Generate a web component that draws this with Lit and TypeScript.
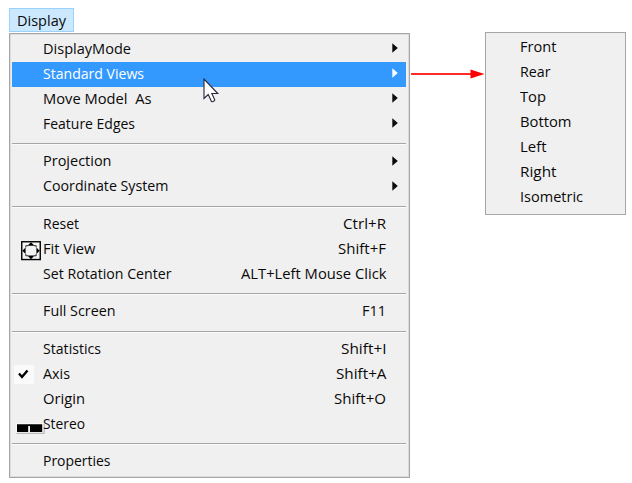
import { LitElement, html, css, svg, nothing } from "lit";
import { customElement, property } from "lit/decorators.js";

interface Entry {
  label: string;
  width: number;
  keys?: string;
  keysWidth?: number;
  sub?: boolean;
  active?: boolean;
  icon?: "fit" | "check" | "stereo";
}

const groups: Entry[][] = [
  [
    { label: "DisplayMode", width: 88, sub: true },
    { label: "Standard Views", width: 101, sub: true, active: true },
    { label: "Move Model\u00a0 As", width: 108.5, sub: true },
    { label: "Feature Edges", width: 92, sub: true },
  ],
  [
    { label: "Projection", width: 68.5, sub: true },
    { label: "Coordinate System", width: 125.5, sub: true },
  ],
  [
    { label: "Reset", width: 36, keys: "Ctrl+R", keysWidth: 43 },
    { label: "Fit View", width: 52.5, keys: "Shift+F", keysWidth: 48, icon: "fit" },
    { label: "Set Rotation Center", width: 128.5, keys: "ALT+Left Mouse Click", keysWidth: 145.5 },
  ],
  [{ label: "Full Screen", width: 72.5, keys: "F11", keysWidth: 24 }],
  [
    { label: "Statistics", width: 58, keys: "Shift+I", keysWidth: 45.5 },
    { label: "Axis", width: 27, keys: "Shift+A", keysWidth: 50.5, icon: "check" },
    { label: "Origin", width: 42, keys: "Shift+O", keysWidth: 52 },
    { label: "Stereo", width: 42, icon: "stereo" },
  ],
  [{ label: "Properties", width: 67.5 }],
];

const views: [string, number][] = [
  ["Front", 36.5], ["Rear", 30.5], ["Top", 26], ["Bottom", 51.5],
  ["Left", 26.5], ["Right", 36.5], ["Isometric", 63],
];

/* A line of text condensed or widened to a given width. */
@customElement("fit-label")
export class FitLabel extends LitElement {
  @property() text = "";
  @property({ type: Number }) width = 0;

  static styles = css`
    :host { display: block; white-space: pre; flex: none; }
    .text { display: inline-block; transform-origin: 0 50%; }
  `;

  firstUpdated() {
    const span = this.renderRoot.querySelector<HTMLElement>(".text")!;
    const natural = span.getBoundingClientRect().width;
    this.style.width = `${this.width}px`;
    if (natural) span.style.transform = `scaleX(${this.width / natural})`;
  }

  render() {
    return html`<span class="text">${this.text}</span>`;
  }
}

const fitIcon = html`<svg class="fit" width="20" height="20" viewBox="0 0 20 20">
  <rect x=".75" y=".75" width="18.5" height="17.8" fill="#f4f4f4" stroke="#000" stroke-width="1.4"/>
  <path d="M10 1.3 13.6 4.8H6.4ZM10 18.3 6.4 14.6H13.6ZM1.3 9.7 4.6 6.4V13ZM18.7 9.7 15.4 6.4V13Z"/>
  <path d="M4.8 6.5V4.7H7M13 4.7h2.2v1.8M15.2 13v1.8H13M7 14.8H4.8V13" fill="none" stroke="#000" stroke-width=".8"/>
</svg>`;
const checkIcon = html`<svg class="check" width="20" height="19" viewBox="0 0 20 19">
  <rect width="20" height="19" fill="#fafafa"/>
  <path d="M5 8.5 8 12 13.5 5.5" fill="none" stroke="#000" stroke-width="2.4"/>
</svg>`;
const stereoIcon = html`<svg class="stereo" width="29" height="11" viewBox="0 0 29 11">
  <rect width="28" height="10" fill="#f8f8f8"/>
  <path d="M.5 10.3H28.2V1" fill="none" stroke="#aaa"/>
  <path d="M1 1.2H26.2V9H14V3H12.2V9H1Z"/>
</svg>`;
const icons = { fit: fitIcon, check: checkIcon, stereo: stereoIcon };

@customElement("app-root")
export class AppRoot extends LitElement {
  static styles = css`
    :host {
      display: block; position: relative; box-sizing: border-box;
      width: 632px; height: 483px; padding: 8px 0 0 9px; overflow: hidden;
      background: #fff; color: #0a0a0a;
      font: 14.7px/25px "Open Sans", "Noto Sans", sans-serif;
    }
    .tab {
      box-sizing: border-box; width: 65px; height: 24px; padding-left: 7px;
      line-height: 23px; background: #cce8ff; border: 1px solid #99d1ff;
    }
    .columns { display: flex; align-items: flex-start; }
    .menu, .submenu { box-sizing: border-box; background: #f0f0f0; border: 1px solid #a6a6a6; }
    .menu {
      width: 401px; height: 445px; margin-top: 1px; padding: 3px 3px 0 2px;
      box-shadow: inset 0 0 0 1px #dcdcdc;
    }
    .row { display: flex; align-items: center; box-sizing: border-box; height: 25px; }
    .menu .row { padding-bottom: 3px; }
    .submenu .row { padding-bottom: 2px; }
    .active { background: #3399ff; color: #fff; }
    .gutter { display: flex; align-items: flex-start; width: 31px; height: 25px; flex: none; align-self: flex-start; }
    .space { flex: 1; }
    .keys { margin-right: 20px; }
    .arrow { width: 6px; height: 10px; margin-right: 8px; fill: currentColor; }
    .divider { box-sizing: border-box; height: 12.5px; padding-top: 6px; }
    .line { height: 1px; background: #a5a5a5; border-bottom: 1px solid #fbfbfb; }
    .fit { margin: 4px 0 0 9px; flex: none; }
    .check { margin: 3px 0 0 2px; flex: none; }
    .stereo { margin: 11px 0 0 4px; flex: none; }
    .connector { width: 75px; height: 10px; margin-top: 37px; flex: none; }
    .submenu { width: 141px; height: 183px; padding: 2px 0 0 33.5px; }
    .cursor { position: absolute; left: 203px; top: 78px; }
  `;

  private row(e: Entry) {
    return html`<div class="row ${e.active ? "active" : ""}">
      <div class="gutter">${e.icon ? icons[e.icon] : nothing}</div>
      <fit-label .text=${e.label} .width=${e.width}></fit-label>
      <div class="space"></div>
      ${e.keys ? html`<fit-label class="keys" .text=${e.keys} .width=${e.keysWidth!}></fit-label>` : nothing}
      ${e.sub ? html`<svg class="arrow" viewBox="0 0 6 10">${svg`<path d="M.3 .3 5.8 5 .3 9.7Z"/>`}</svg>` : nothing}
    </div>`;
  }

  render() {
    return html`
      <div class="tab"><fit-label .text=${"Display"} .width=${49}></fit-label></div>
      <div class="columns">
        <div class="menu">
          ${groups.map((g, i) => html`
            ${i ? html`<div class="divider"><div class="line"></div></div>` : nothing}
            ${g.map((e) => this.row(e))}`)}
        </div>
        <svg class="connector" viewBox="0 0 75 10">
          <path d="M1 5H62" stroke="#ff2a2a" stroke-width="2"/>
          <path d="M60.5 .5 74.5 5 60.5 9.5Z" fill="#f00"/>
        </svg>
        <div class="submenu">
          ${views.map(([t, w]) => html`<div class="row"><fit-label .text=${t} .width=${w}></fit-label></div>`)}
        </div>
      </div>
      <svg class="cursor" width="17" height="26" viewBox="0 0 17 26">
        <path d="M1 1V20.5L5.2 16.5 8.5 23.5Q10.5 24.5 11.8 22L8.8 15.5H14.8Z" fill="#fff" stroke="#26263a" stroke-width="1.1"/>
      </svg>`;
  }
}
